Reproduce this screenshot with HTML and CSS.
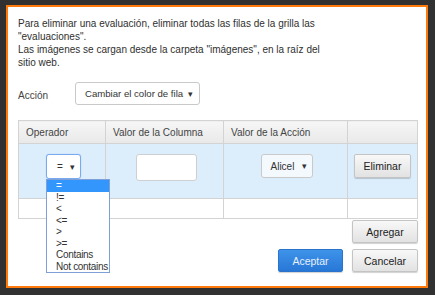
FILE: index.html
```html
<!DOCTYPE html>
<html lang="es">
<head>
<meta charset="utf-8">
<link rel="stylesheet" href="styles.css">
</head>
<body>
<div class="dialog">
  <p class="msg">Para eliminar una evaluación, eliminar todas las filas de la grilla las<br>"evaluaciones".<br>Las imágenes se cargan desde la carpeta "imágenes", en la raíz del<br>sitio web.</p>
  <div class="action-row">
    <span class="label">Acción</span>
    <div class="select select-action"><span>Cambiar el color de fila</span><span class="arrow">▾</span></div>
  </div>
  <table class="grid">
    <colgroup>
      <col class="c1"><col class="c2"><col class="c3"><col class="c4">
    </colgroup>
    <thead>
      <tr>
        <th>Operador</th>
        <th>Valor de la Columna</th>
        <th>Valor de la Acción</th>
        <th></th>
      </tr>
    </thead>
    <tbody>
      <tr class="row-sel">
        <td>
          <div class="op-wrap">
            <div class="select select-op"><span>=</span><span class="arrow">▾</span></div>
            <ul class="dropdown">
              <li class="active">=</li>
              <li>!=</li>
              <li>&lt;</li>
              <li>&lt;=</li>
              <li>&gt;</li>
              <li>&gt;=</li>
              <li>Contains</li>
              <li>Not contains</li>
            </ul>
          </div>
        </td>
        <td><div class="textbox"></div></td>
        <td><div class="select select-val"><span>Alicel</span><span class="arrow">▾</span></div></td>
        <td><button class="btn btn-del">Eliminar</button></td>
      </tr>
      <tr class="row-empty">
        <td></td><td></td><td></td><td></td>
      </tr>
    </tbody>
  </table>
  <div class="btn-row btn-row-add">
    <button class="btn">Agregar</button>
  </div>
  <div class="btn-row btn-row-final">
    <button class="btn btn-primary">Aceptar</button>
    <button class="btn">Cancelar</button>
  </div>
</div>
</body>
</html>
```
FILE: styles.css
```css
html, body {
  margin: 0;
  padding: 0;
  background: #313131;
}
body {
  font-family: "Liberation Sans", Arial, sans-serif;
  font-size: 10px;
  color: #333;
  padding: 5px 0 0 6px;
}
.dialog {
  box-sizing: border-box;
  width: 422px;
  height: 283px;
  border: 2px solid #ff7a0a;
  background: #fff;
  padding: 10px 8px 0 10px;
}
.msg {
  margin: 0;
  line-height: 13px;
  font-size: 10px;
  color: #2f2f2f;
}
.action-row {
  display: flex;
  align-items: center;
  margin-top: 13px;
  height: 23px;
}
.label {
  width: 57px;
  padding-top: 4px;
  color: #444;
}
.select {
  box-sizing: border-box;
  display: flex;
  align-items: center;
  justify-content: space-between;
  border: 1px solid #c9c9c9;
  border-radius: 3px;
  background: #fff;
  font-size: 10px;
  color: #333;
}
.select .arrow {
  font-size: 9px;
  color: #333;
}
.select-action {
  width: 125px;
  height: 23px;
  padding: 0 6px 0 9px;
  font-size: 9.6px;
}
.grid {
  margin-top: 15px;
  width: 399px;
  border-collapse: collapse;
  table-layout: fixed;
}
.c1 { width: 87px; }
.c2 { width: 118px; }
.c3 { width: 124px; }
.c4 { width: 70px; }
.grid th, .grid td {
  border: 1px solid #d3d3d3;
  padding: 0;
}
.grid th {
  height: 22px;
  text-align: left;
  font-weight: normal;
  color: #444;
  padding-left: 7px;
  background: linear-gradient(#f6f6f6, #e9e9e9);
}
.row-sel td {
  background: #dcedfc;
  height: 44px;
  vertical-align: top;
  padding-top: 10px;
  text-align: center;
}
.row-empty td {
  height: 19px;
  background: #fff;
}
.op-wrap {
  position: relative;
  display: inline-block;
  margin-left: 3px;
}
.select-op {
  width: 35px;
  height: 25px;
  padding: 0 5px 0 10px;
  border: 1px solid #79aaf0;
  box-shadow: 0 0 1px #9cc3f5;
  border-radius: 3px;
}
.dropdown {
  position: absolute;
  left: 0;
  top: 25px;
  width: 64px;
  box-sizing: border-box;
  margin: 0;
  padding: 0;
  list-style: none;
  background: #fff;
  border: 1px solid #7f9fd8;
  text-align: left;
  font-size: 10px;
  letter-spacing: -0.3px;
  z-index: 5;
}
.dropdown li {
  height: 11.5px;
  line-height: 11.5px;
  padding-left: 9px;
  color: #333;
  white-space: nowrap;
}
.dropdown li.active {
  background: #3296fd;
  color: #fff;
}
.textbox {
  display: inline-block;
  box-sizing: border-box;
  width: 61px;
  height: 27px;
  border: 1px solid #cfcfcf;
  border-radius: 3px;
  background: #fff;
  margin-left: 3px;
}
.select-val {
  display: inline-flex;
  width: 52px;
  height: 24px;
  padding: 0 5px 0 9px;
  background: #f4f9fe;
  margin-left: 2px;
}
.btn {
  box-sizing: border-box;
  height: 24px;
  border: 1px solid #c4c4c4;
  border-radius: 2px;
  background: linear-gradient(#f8f8f8, #e2e2e2);
  box-shadow: 0 1px 1px rgba(0,0,0,0.18);
  font-family: "Liberation Sans", Arial, sans-serif;
  font-size: 10.5px;
  color: #222;
  padding: 0;
  cursor: pointer;
}
.btn-del {
  width: 57px;
}
.btn-row {
  display: flex;
  justify-content: flex-end;
  gap: 9px;
  width: 400px;
}
.btn-row .btn {
  width: 66px;
  height: 23px;
}
.btn-row-add {
  margin-top: 1px;
}
.btn-row-final {
  margin-top: 6px;
}
.btn-row .btn-primary {
  width: 65px;
  background: linear-gradient(#3e93e9, #2877d6);
  border-color: #2a74cc;
  color: #e6f0fb;
}
```
